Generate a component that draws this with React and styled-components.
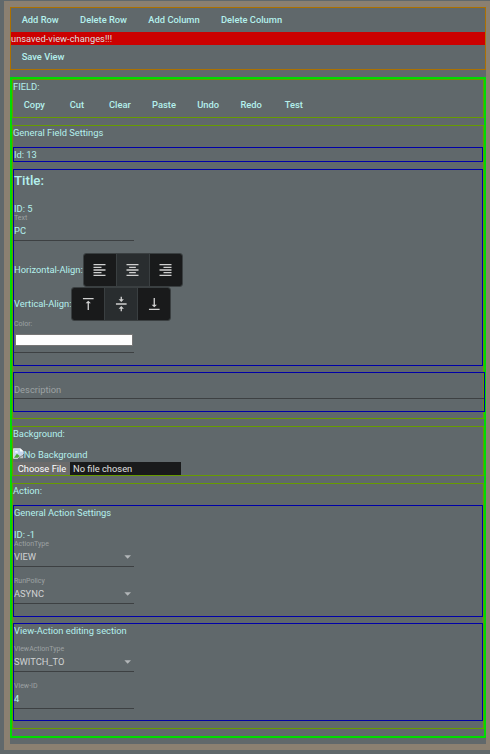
import React from "react";
import styled, { createGlobalStyle } from "styled-components";

const Global = createGlobalStyle`
  *, *::before, *::after { box-sizing: border-box; }
  html, body { margin: 0; padding: 0; background: #60686b; }
  body {
    font-family: Roboto, "Liberation Sans", sans-serif;
    font-size: 9.33px;
    line-height: 13px;
    color: #b4f0ed;
    overflow: hidden;
  }
`;

const Page = styled.main`
  height: 754px;
  padding: 1px 0 4px 4px;
  background: #60686b;
`;

const Frame = styled.div`
  width: 488px;
  height: 749px;
  border: 6px solid #8b8071;
  background: #60686b;
`;

const Toolbar = styled.section`
  border: 1px solid #ac7100;
  height: 63px;
`;

const Buttons = styled.div`
  display: flex;
  height: 24px;
`;

const Button = styled.button`
  min-width: 42.67px;
  height: 24px;
  padding: 0 10.67px;
  border: 0;
  background: transparent;
  color: inherit;
  font: 500 9.33px/24px Roboto, sans-serif;
  text-align: center;
  white-space: nowrap;
`;

const Warning = styled.div`
  height: 13px;
  background: #cc0000;
  color: #dedede;
`;

const Editor = styled.section`
  margin-top: 7px;
  border: 2px solid #00dc00;
  height: 661px;
`;

const Section = styled.section`
  border: 1px solid #679b00;
  height: ${(p) => p.$height}px;
  margin-bottom: 7px;
`;

const Group = styled.div`
  border: 1px solid #0000a8;
  height: ${(p) => p.$height}px;
  margin-top: ${(p) => p.$gap}px;
  width: ${(p) => (p.$wide ? "472px" : "auto")};
`;

const Line = styled.div`
  height: 13px;
  margin-top: ${(p) => p.$gap || 0}px;
  white-space: nowrap;
`;

const Title = styled.h2`
  margin: 0;
  font-size: 13.33px;
  font-weight: 500;
  line-height: 21px;
  height: 21px;
`;

const Field = styled.div`
  width: 120px;
  height: ${(p) => p.$height || 28}px;
  margin-top: ${(p) => p.$gap || 0}px;
  border-bottom: 1px solid #3d4042;
  display: flex;
  flex-direction: column;
`;

const Label = styled.label`
  height: 9px;
  line-height: 11px;
  font-size: 7px;
  color: #9da2a3;
`;

const Value = styled.div`
  display: flex;
  justify-content: space-between;
  align-items: center;
  height: 14px;
  margin-top: 2px;
  line-height: 14px;
  padding-right: 3px;
  color: ${(p) => p.$color || "inherit"};
`;

const Arrow = styled.span`
  width: 6.67px;
  height: 3.33px;
  background: #b2b6b8;
  clip-path: polygon(0 0, 100% 0, 50% 100%);
`;

const Swatch = styled.div`
  width: 118px;
  height: 12px;
  margin: 6px 0 0 1px;
  background: #fff;
  border: 1px solid #767676;
`;

const AlignRow = styled.div`
  display: flex;
  height: 34px;
  line-height: 34px;
  margin-top: ${(p) => p.$gap || 0}px;
`;

const Toggles = styled.div`
  display: flex;
  width: 100px;
  height: 34px;
  border: 1px solid #3a3f41;
  border-radius: 3px;
  overflow: hidden;
`;

const Toggle = styled.button`
  flex: 1;
  display: flex;
  align-items: center;
  justify-content: center;
  padding: 0 ${(p) => (p.$nudge ? "1px" : "0")} 0 0;
  border: 0;
  border-left: ${(p) => (p.$first ? "0" : "1px solid #3a3f41")};
  background: ${(p) => (p.$active ? "#292d2f" : "#191a1b")};
  color: #d0d0d0;
`;

const Description = styled.div`
  height: 26px;
  padding-top: 10px;
  border-bottom: 1px solid #3d4042;
  color: #9da2a3;
`;

const Missing = styled.div`
  display: flex;
  height: 14px;
  margin-top: 8px;
  line-height: 14px;
`;

const FilePicker = styled.div`
  display: flex;
  width: 168px;
  height: 13px;
  background: #191a1b;
  color: #e0e0e0;
`;

const FileButton = styled.span`
  width: 57px;
  padding-left: 1px;
  text-align: center;
  background: #6b6b6b;
  color: #fff;
  margin-right: 3px;
`;

const paths = {
  left: "M15 15H3v2h12v-2zm0-8H3v2h12V7zM3 13h18v-2H3v2zm0 8h18v-2H3v2zM3 3v2h18V3H3z",
  center: "M7 15v2h10v-2H7zm-4 6h18v-2H3v2zm0-8h18v-2H3v2zm4-6v2h10V7H7zM3 3v2h18V3H3z",
  right: "M3 21h18v-2H3v2zm6-4h12v-2H9v2zm-6-4h18v-2H3v2zm6-4h12V7H9v2zM3 3v2h18V3H3z",
  top: "M8 11h3v10h2V11h3l-4-4-4 4zM4 3v2h16V3H4z",
  middle: "M8 19h3v4h2v-4h3l-4-4-4 4zm8-14h-3V1h-2v4H8l4 4 4-4zM4 11v2h16v-2H4z",
  bottom: "M16 13h-3V3h-2v10H8l4 4 4-4zM4 19v2h16v-2H4z",
};

const Icon = ({ name, nudge }) => (
  <svg
    width="16"
    height="16"
    viewBox={nudge ? "-0.75 0 24 24" : "-0.4 0 24 24"}
    fill="currentColor"
  >
    <path d={paths[name]} />
  </svg>
);

const ToggleGroup = ({ names, nudge }) => (
  <Toggles>
    {names.map((n, i) => (
      <Toggle key={n} $first={i === 0} $active={i === 1} $nudge={nudge} aria-label={n}>
        <Icon name={n} nudge={nudge} />
      </Toggle>
    ))}
  </Toggles>
);

const Select = ({ label, value, gap }) => (
  <Field $gap={gap}>
    <Label>{label}</Label>
    <Value $color="#d0d2d3">
      {value}
      <Arrow />
    </Value>
  </Field>
);

const Input = ({ label, value, gap }) => (
  <Field $gap={gap}>
    <Label>{label}</Label>
    <Value>{value}</Value>
  </Field>
);

const BrokenImage = () => (
  <svg width="10.67" height="11" viewBox="0 0 11 11">
    <path d="M0.5 0.5H7.5L10.5 3.5V6L7 8.5L5 10.5H0.5Z" fill="#c3d5ef" stroke="#d9dcde" />
    <path d="M7.3 0V3.5H11Z" fill="#fff" />
    <path d="M1 10L4 5.8L7 8.2L5 10Z" fill="#50a53b" />
    <path d="M2 4.5Q2 3 3.3 3Q5 2.5 5.3 4.5Z" fill="#fff" />
    <path d="M6.5 10.5L10.5 7V10.5Z" fill="#c4c7c9" />
  </svg>
);

export default function App() {
  return (
    <>
      <Global />
      <Page>
        <Frame>
          <Toolbar>
            <Buttons>
              {["Add Row", "Delete Row", "Add Column", "Delete Column"].map((t) => (
                <Button key={t}>{t}</Button>
              ))}
            </Buttons>
            <Warning>unsaved-view-changes!!!</Warning>
            <Buttons>
              <Button>Save View</Button>
            </Buttons>
          </Toolbar>
          <Editor>
            <Section $height={39}>
              <Line>FIELD:</Line>
              <Buttons>
                {["Copy", "Cut", "Clear", "Paste", "Undo", "Redo", "Test"].map((t) => (
                  <Button key={t}>{t}</Button>
                ))}
              </Buttons>
            </Section>
            <Section $height={294}>
              <Line>General Field Settings</Line>
              <Group $height={15} $gap={8}>
                <Line>Id: 13</Line>
              </Group>
              <Group $height={197} $gap={7}>
                <Title>Title:</Title>
                <Line $gap={11}>ID: 5</Line>
                <Input label="Text" value="PC" gap={-2} />
                <AlignRow $gap={12}>
                  Horizontal-Align:
                  <ToggleGroup names={["left", "center", "right"]} nudge />
                </AlignRow>
                <AlignRow>
                  Vertical-Align:
                  <ToggleGroup names={["top", "middle", "bottom"]} />
                </AlignRow>
                <Field $height={34} $gap={-2}>
                  <Label>Color:</Label>
                  <Swatch />
                </Field>
              </Group>
              <Group $height={40} $gap={6} $wide>
                <Description>Description</Description>
              </Group>
            </Section>
            <Section $height={50}>
              <Line>Background:</Line>
              <Missing>
                <BrokenImage />
                No Background
              </Missing>
              <FilePicker>
                <FileButton>Choose File</FileButton>
                No file chosen
              </FilePicker>
            </Section>
            <Section $height={246}>
              <Line>Action:</Line>
              <Group $height={112} $gap={8}>
                <Line>General Action Settings</Line>
                <Line $gap={9}>ID: -1</Line>
                <Select label="ActionType" value="VIEW" gap={-2} />
                <Select label="RunPolicy" value="ASYNC" gap={9} />
              </Group>
              <Group $height={98} $gap={6}>
                <Line>View-Action editing section</Line>
                <Select label="ViewActionType" value="SWITCH_TO" gap={7} />
                <Input label="View-ID" value="4" gap={9} />
              </Group>
            </Section>
          </Editor>
        </Frame>
      </Page>
    </>
  );
}
